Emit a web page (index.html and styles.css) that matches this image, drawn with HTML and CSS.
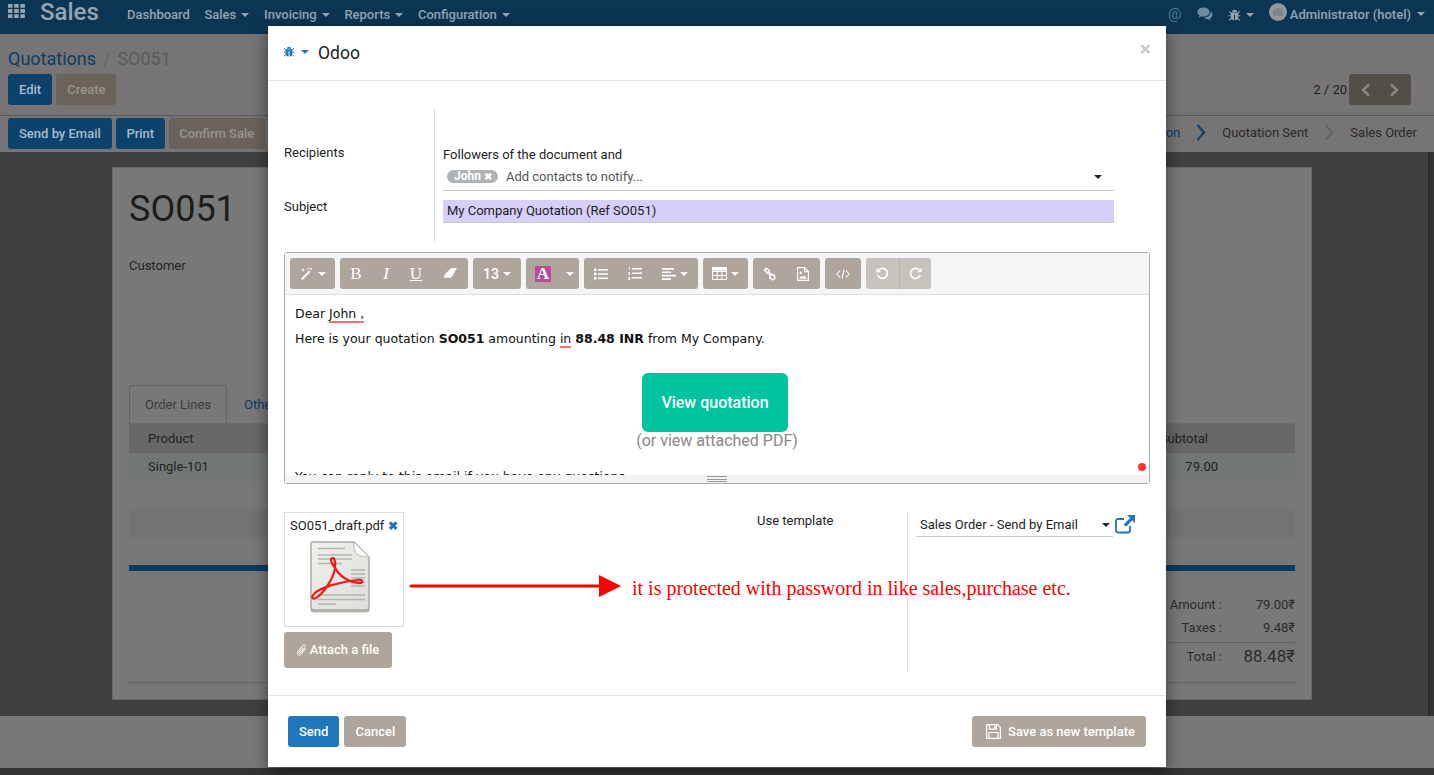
FILE: index.html
```html
<!DOCTYPE html>
<html lang="en">
<head>
    <meta charset="UTF-8">
    <title>Sales - Odoo</title>
    <link rel="stylesheet" href="styles.css">
</head>
<body>
    <svg class="sprites" width="0" height="0">
        <symbol id="bug" viewBox="0 0 16 16">
            <path fill="currentColor" d="M5 4.2C5.3 2.6 6.5 1.6 8 1.600s2.700 1 3 2.600zM4.300 5h7.400c.5 0 .8.300.8.800v6c0 1.600-1.500 2.700-3.900 2.800V7.500h-1.200v7.100c-2.400-.1-3.900-1.200-3.900-2.800v-6c0-.5.300-.8.800-.8z"/>
            <path fill="none" stroke="currentColor" stroke-width="1.300" d="M4 6 1.500 3.500M12 6l2.500-2.500M3.500 9H.7M12.500 9h2.800M4 12l-2.500 2.500M12 12l2.500 2.500"/>
        </symbol>
    </svg>

    <header class="navbar">
        <svg class="apps-icon" width="17" height="14" viewBox="0 0 17 14">
            <path fill="currentColor" d="M0 0h4.500v3.800H0zM6.200 0h4.500v3.800H6.200zM12.400 0h4.500v3.800h-4.500zM0 5.100h4.500v3.800H0zM6.200 5.100h4.500v3.800H6.200zM12.400 5.100h4.500v3.800h-4.500zM0 10.200h4.500V14H0zM6.200 10.200h4.500V14H6.200zM12.400 10.200h4.500V14h-4.500z"/>
        </svg>
        <span class="brand">Sales</span>
        <nav class="menu">
            <span>Dashboard</span>
            <span>Sales <i class="caret"></i></span>
            <span>Invoicing <i class="caret"></i></span>
            <span>Reports <i class="caret"></i></span>
            <span>Configuration <i class="caret"></i></span>
        </nav>
        <div class="systray">
            <span class="at">@</span>
            <svg width="16" height="14" viewBox="0 0 16 14">
                <path fill="currentColor" d="M6.500.5C3 .5.500 2.500.500 5c0 1.400.8 2.600 2 3.400L1.700 10.800 4.500 9.300c.6.200 1.300.2 2 .2 3.500 0 6-2 6-4.500s-2.500-4.500-6-4.500z"/>
                <path fill="currentColor" d="M13.500 4.200c.1.300.1.500.1.800 0 3-3 5.500-6.800 5.600 1 1 2.500 1.500 4.200 1.500l2.700 1.400-.6-2.200c1.200-.7 2.400-1.800 2.400-3.300 0-1.600-.8-3-2-3.800z"/>
            </svg>
            <span class="systray-bug"><svg width="13" height="14"><use href="#bug"/></svg> <i class="caret"></i></span>
            <span class="user">
                <span class="avatar">
                    <svg width="10" height="8" viewBox="0 0 10 8"><path fill="#7d8487" d="M3 0h4l1 1.500h2V8H0V1.500h2z"/></svg>
                </span>
                <span>Administrator (hotel)</span>
                <i class="caret"></i>
            </span>
        </div>
    </header>

    <section class="control-panel">
        <div class="breadcrumb"><span class="crumb-link">Quotations</span> <span class="crumb-sep">/</span> <span>SO051</span></div>
        <div class="cp-buttons">
            <div class="cp-left">
                <span class="btn btn-dim-primary">Edit</span>
                <span class="btn btn-dim">Create</span>
            </div>
            <div class="pager">
                <span>2 / 20</span>
                <span class="pager-btns">
                    <svg width="12" height="14" viewBox="0 0 12 14"><path fill="none" stroke="currentColor" stroke-width="2.400" d="M9 1.500 3 7l6 5.500"/></svg>
                    <svg width="12" height="14" viewBox="0 0 12 14"><path fill="none" stroke="currentColor" stroke-width="2.400" d="M3 1.500 9 7l-6 5.500"/></svg>
                </span>
            </div>
        </div>
    </section>

    <section class="statusbar">
        <div class="cp-left">
            <span class="btn btn-dim-primary">Send by Email</span>
            <span class="btn btn-dim-primary btn-print">Print</span>
            <span class="btn btn-dim btn-confirm">Confirm Sale</span>
        </div>
        <div class="stages">
            <span class="stage-link">on</span>
            <svg width="10" height="17" viewBox="0 0 10 17"><path fill="none" stroke="#0c426c" stroke-width="2.200" d="M1.500 1 8 8.500 1.500 16"/></svg>
            <span>Quotation Sent</span>
            <svg width="10" height="17" viewBox="0 0 10 17"><path fill="none" stroke="#646262" stroke-width="2.200" d="M1.500 1 8 8.500 1.500 16"/></svg>
            <span>Sales Order</span>
        </div>
    </section>

    <main class="sheet-area">
        <article class="sheet">
            <h1 class="so-name">SO051</h1>
            <div class="so-customer">Customer</div>
            <div class="tabs">
                <span class="tab-active">Order Lines</span>
                <span class="tab-link">Other Information</span>
            </div>
            <div class="line-head"><span>Product</span><span>Subtotal</span></div>
            <div class="line-row"><span>Single-101</span><span>79.00</span></div>
            <div class="line-empty"></div>
            <div class="blue-rule"></div>
            <div class="totals">
                <div class="total-row"><span>Untaxed Amount :</span><span class="total-val">79.00₹</span></div>
                <div class="total-row"><span>Taxes :</span><span class="total-val">9.48₹</span></div>
                <div class="total-row total-final"><span>Total :</span><span class="total-val">88.48₹</span></div>
            </div>
            <div class="sheet-foot"></div>
        </article>
    </main>
    <div class="bottom-band"></div>

    <div class="modal">
        <div class="modal-header">
            <svg class="modal-bug" width="12" height="13"><use href="#bug"/></svg>
            <i class="caret caret-blue"></i>
            <h4 class="modal-title">Odoo</h4>
            <span class="modal-close">×</span>
        </div>

        <div class="modal-body">
            <div class="mail-form">
                <div class="mail-labels">
                    <div class="label-recipients">Recipients</div>
                    <div class="label-subject">Subject</div>
                </div>
                <div class="mail-fields">
                    <div class="followers">Followers of the document and</div>
                    <div class="recipients-input">
                        <span class="tag">John <b>✖</b></span>
                        <span class="placeholder">Add contacts to notify...</span>
                        <i class="caret caret-dark"></i>
                    </div>
                    <div class="subject-input">My Company Quotation (Ref SO051)</div>
                </div>
            </div>

            <div class="editor">
                <div class="toolbar">
                    <div class="tool-group tg-style">
                        <span class="tool">
                            <svg width="14" height="14" viewBox="0 0 14 14"><path fill="currentColor" d="M1 11.500 9 3.500l1.500 1.500-8 8zM3 1l.6 1.400L5 3l-1.400.6L3 5l-.6-1.400L1 3l1.400-.6zM11 .5l.5 1 1 .5-1 .5-.5 1-.5-1-1-.5 1-.5zM8 .5l.4.9.9.4-.9.4-.4.9-.4-.9-.9-.4.9-.4z"/></svg>
                            <i class="caret"></i>
                        </span>
                    </div>
                    <div class="tool-group tg-font">
                        <span class="tool tool-letter"><b>B</b></span>
                        <span class="tool tool-letter"><em>I</em></span>
                        <span class="tool tool-letter"><u>U</u></span>
                        <span class="tool tool-eraser">
                            <svg width="15" height="11" viewBox="0 0 15 11"><path fill="currentColor" d="M9.500 0H15L10 8.500H1.500L0 11h0L4 5zM1.800 9.800h7.300L10 8.500H2.600z"/></svg>
                        </span>
                    </div>
                    <div class="tool-group tg-size">
                        <span class="tool tool-size">13 <i class="caret"></i></span>
                    </div>
                    <div class="tool-group tg-color">
                        <span class="tool tool-color"><span class="color-a">A</span></span>
                        <span class="tool tool-color-caret"><i class="caret"></i></span>
                    </div>
                    <div class="tool-group tg-para">
                        <span class="tool">
                            <svg width="14" height="12" viewBox="0 0 14 12"><path fill="currentColor" d="M0 .500h2.500V3H0zM0 4.800h2.500v2.500H0zM0 9h2.500v2.500H0zM4 1h10v1.500H4zM4 5.300h10v1.500H4zM4 9.500h10V11H4z"/></svg>
                        </span>
                        <span class="tool">
                            <svg width="14" height="13" viewBox="0 0 14 13"><path fill="currentColor" d="M.5 0h1.300v3H.9V1H.5zM0 5h2.200v.8H1L2.200 7.500V8H0v-.7h1.200L0 5.600zM0 10h2.200v3H0v-.7h1.300v-.4H.5v-.7h.8v-.4H0zM4 1h10v1.500H4zM4 5.500h10V7H4zM4 10h10v1.500H4z"/></svg>
                        </span>
                        <span class="tool tool-align">
                            <svg width="14" height="12" viewBox="0 0 14 12"><path fill="currentColor" d="M0 0h12v1.700H0zM0 3.400h9v1.700H0zM0 6.800h14v1.700H0zM0 10.200h9V12H0z"/></svg>
                            <i class="caret"></i>
                        </span>
                    </div>
                    <div class="tool-group tg-table">
                        <span class="tool">
                            <svg width="15" height="13" viewBox="0 0 15 13"><path fill="none" stroke="currentColor" d="M.5.500h14v12H.5zM.5 4.500h14M.5 8.500h14M5.200.5v12M9.800.5v12"/><path fill="currentColor" d="M0 0h15v3.500H0z"/></svg>
                            <i class="caret"></i>
                        </span>
                    </div>
                    <div class="tool-group tg-insert">
                        <span class="tool">
                            <svg width="13" height="14" viewBox="0 0 13 14"><path fill="none" stroke="currentColor" stroke-width="1.500" d="M1.500 3.200 3.200 1.500 6 3.200 6.200 5.800 4.500 6.400zM6.800 7.600l1.700-.6 3 1.700.2 2.500-1.800 1.700-3-1.800z"/><path stroke="currentColor" stroke-width="1.500" d="m4.500 4.500 4 4.500"/></svg>
                        </span>
                        <span class="tool">
                            <svg width="12" height="14" viewBox="0 0 12 14"><path fill="none" stroke="currentColor" stroke-width="1.200" d="M.6.600h7l3.800 3.800v9H.6zM7.500.6v4h4"/><path fill="currentColor" d="m2 11.800 2.500-3 1.500 1.500 1.300-2 2.700 3.500z"/><circle fill="currentColor" cx="3.800" cy="5.800" r="1.200"/></svg>
                        </span>
                    </div>
                    <div class="tool-group tg-code">
                        <span class="tool">
                            <svg width="14" height="10" viewBox="0 0 14 10"><path fill="none" stroke="currentColor" stroke-width="1.100" d="M4 1.500.9 5 4 8.500M10 1.500 13.100 5 10 8.500M8.200.5 5.800 9.500"/></svg>
                        </span>
                    </div>
                    <div class="tool-group tg-history">
                        <span class="tool tool-off">
                            <svg width="13" height="13" viewBox="0 0 13 13"><path fill="none" stroke="currentColor" stroke-width="1.700" d="M3 2.800A5 5 0 1 1 1.700 8"/><path fill="currentColor" d="M.5.800v4.500H5z"/></svg>
                        </span>
                        <span class="tool tool-off">
                            <svg width="13" height="13" viewBox="0 0 13 13"><path fill="none" stroke="currentColor" stroke-width="1.700" d="M10 2.800A5 5 0 1 0 11.300 8"/><path fill="currentColor" d="M12.500.8v4.500H8z"/></svg>
                        </span>
                    </div>
                </div>

                <div class="editor-body">
                    <p class="dear">Dear <span class="spell">John ,</span></p>
                    <p class="mail-line">Here is your quotation <b>SO051</b> amounting <span class="spell">in</span> <b>88.48 INR</b> from My Company.</p>
                    <div class="view-wrap">
                        <span class="view-btn">View quotation</span>
                        <span class="view-pdf">(or view attached PDF)</span>
                    </div>
                    <p class="mail-line mail-clipped">You can reply to this email if you have any questions.</p>
                    <span class="red-dot"></span>
                </div>
                <div class="resize-bar"><span class="grip"></span></div>
            </div>

            <div class="attach-row">
                <div class="attach-col">
                    <div class="attachment">
                        <div class="attachment-name">SO051_draft.pdf <b>✖</b></div>
                        <svg class="pdf-icon" width="62" height="72" viewBox="0 0 62 72">
                            <defs>
                                <linearGradient id="paper" x1="0" y1="0" x2="1" y2="1">
                                    <stop offset="0" stop-color="#f0f1ec"/>
                                    <stop offset="1" stop-color="#dcdeda"/>
                                </linearGradient>
                            </defs>
                            <path fill="#b5b5b0" d="M2 67h58l1 3-3 1.500H4L1 70z"/>
                            <path fill="url(#paper)" stroke="#a9aaa5" stroke-width="1.500" d="M3 1h42l15 15v50c0 2-1 3-3 3H5c-2 0-3-1-3-3V3c0-1 0-2 1-2z"/>
                            <path fill="#fafafa" stroke="#b7b8b3" d="M45 1c-1 10 2 15 15 15z"/>
                            <path fill="none" stroke="#b3b5af" stroke-width="1.300" d="M9 7.500h27M9 14h34M9 18h34M9 22.500h24M42 29h14M42 33h14M42 37h14M42 41h14M42 45h14M9 54h47M9 58.500h47M9 63h18"/>
                            <path fill="none" stroke="#f01a1a" stroke-width="2.200" d="M22 18c3-3 5 2 4 9-1 9-10 24-19 30-4 2-5-1-2-4 6-7 27-12 43-14 5-1 7 2 4 3-8 1-19-5-24-12-3-5-7-9-6-12z"/>
                        </svg>
                    </div>
                    <span class="btn btn-tan btn-attach">
                        <svg width="10" height="12" viewBox="0 0 10 12"><path fill="none" stroke="currentColor" d="M8.500 4.500 4.300 10c-1 1.300-2.500 1.300-3.300.6S0 8.600 1 7.400L5.500 1.700c.7-.9 1.700-1 2.300-.5.7.5.7 1.500 0 2.400L3.500 9c-.4.5-.9.600-1.200.3-.3-.2-.3-.7.100-1.200L6 3.500"/></svg>
                        Attach a file
                    </span>
                </div>
                <div class="template-label">Use template</div>
                <div class="template-col">
                    <div class="template-select">
                        <span>Sales Order - Send by Email</span>
                        <i class="caret caret-dark"></i>
                    </div>
                    <svg class="external" width="20" height="19" viewBox="0 0 20 19">
                        <path fill="none" stroke="#1f76ba" stroke-width="1.800" d="M15 11v4.500c0 1.400-.8 2-2 2H3c-1.300 0-2-.7-2-2V6c0-1.300.7-2 2-2h6"/>
                        <path fill="#1f76ba" d="M12 0h8v8l-2.700-2.700-6.300 6.500-2.300-2.300 6.400-6.400z"/>
                    </svg>
                </div>
                <div class="annotation">
                    <svg width="212" height="22" viewBox="0 0 212 22"><path fill="#f00" d="M2 9.500h190v3H2a1.500 1.500 0 0 1 0-3zM190 0l22 11-22 11z"/></svg>
                    <span class="annotation-text">it is protected with password in like sales,purchase etc.</span>
                </div>
            </div>
        </div>

        <div class="modal-footer">
            <span class="btn btn-send">Send</span>
            <span class="btn btn-tan btn-cancel">Cancel</span>
            <span class="btn btn-tan btn-save">
                <svg width="15" height="15" viewBox="0 0 15 15"><path fill="none" stroke="currentColor" stroke-width="1.200" d="M.6.600h11l2.800 2.800v11H.6zM3.500.6v4.500h7V.6M3 14.400V8.500h9v5.900"/><path fill="currentColor" d="M8 1.500h1.500v2.700H8z"/></svg>
                Save as new template
            </span>
        </div>
    </div>
</body>
</html>
```

FILE: styles.css
```css
* {
    box-sizing: border-box;
}
html, body {
    height: 100%;
}
body {
    margin: 0;
    height: 775px;
    overflow: hidden;
    position: relative;
    font-family: Roboto, "Liberation Sans", sans-serif;
    font-size: 13px;
    color: #1d1d1d;
    background-color: #333;
}
.sprites {
    position: absolute;
}
.caret {
    display: inline-block;
    width: 0;
    height: 0;
    border-left: 4px solid transparent;
    border-right: 4px solid transparent;
    border-top: 4px solid currentColor;
    vertical-align: middle;
    margin-left: 2px;
}
.caret-blue {
    color: #1f76ba;
}
.caret-dark {
    color: #222;
}

/* backdrop page */
.navbar {
    height: 34px;
    background-color: #0c3554;
    color: #93a5b3;
    display: flex;
    align-items: center;
    padding: 0 9px 0 8px;
}
.apps-icon {
    margin-right: 15px;
    margin-top: -12px;
}
.brand {
    font-size: 24px;
    font-weight: 500;
    width: 87px;
    margin-top: -11px;
}
.menu {
    display: flex;
    gap: 14.500px;
    font-weight: 500;
    margin-top: -6px;
}
.systray {
    margin-left: auto;
    display: flex;
    align-items: center;
    gap: 15px;
    margin-top: -6px;
}
.at {
    font-size: 15px;
    color: #4d7594;
}
.systray svg {
    color: #6f8ba1;
}
.systray-bug svg {
    vertical-align: middle;
    color: #93a5b3;
}
.user {
    display: flex;
    align-items: center;
    gap: 3px;
    font-weight: 500;
}
.user .caret {
    margin-left: 3px;
}
.avatar {
    width: 18px;
    height: 18px;
    border-radius: 50%;
    background-color: #93999b;
    margin-top: -4px;
    display: flex;
    align-items: center;
    justify-content: center;
}
.control-panel {
    height: 82px;
    background-color: #767474;
    border-bottom: 1px solid #595858;
    padding: 14px 23px 0 8px;
}
.breadcrumb {
    font-size: 18px;
    height: 26px;
    color: #5b5a59;
}
.crumb-link {
    color: #0c3b66;
}
.crumb-sep {
    color: #666464;
    margin: 0 2.500px;
}
.cp-buttons {
    display: flex;
    justify-content: space-between;
}
.cp-left {
    display: flex;
    gap: 4px;
}
.btn {
    display: inline-flex;
    align-items: center;
    justify-content: center;
    height: 31px;
    border-radius: 3px;
    font-weight: 500;
    white-space: nowrap;
}
.btn-dim-primary {
    background-color: #0c426c;
    color: #a7bccd;
    padding: 0 11px;
}
.btn-dim {
    background-color: #69635c;
    color: #98948e;
    padding: 0 11px;
}
.btn-print {
    width: 49px;
    padding: 0;
}
.btn-confirm {
    width: 96px;
    padding: 0;
}
.pager {
    display: flex;
    align-items: center;
    gap: 2px;
    color: #1e1e1e;
}
.pager-btns {
    width: 62px;
    height: 31px;
    border-radius: 3px;
    background-color: #524e48;
    color: #8b8782;
    display: flex;
    align-items: center;
    justify-content: space-around;
    padding: 0 3px;
}
.statusbar {
    height: 36px;
    background-color: #767474;
    padding: 2px 17px 0 8px;
    display: flex;
    justify-content: space-between;
}
.stages {
    display: flex;
    align-items: center;
    gap: 16px;
    color: #2a2a2a;
    height: 28px;
}
.stage-link {
    color: #0c3b66;
}
.sheet-area {
    height: 564px;
    background-color: #404040;
    padding: 15px 116px 0 112px;
    border-right: 2px solid #2b2b2b;
    margin-right: 4px;
}
.sheet {
    height: 533px;
    background-color: #787878;
    border: 1px solid #686868;
    padding: 21px 16px 0;
    color: #222;
    display: flow-root;
}
.so-name {
    margin: 0;
    font-size: 36px;
    font-weight: 400;
    line-height: 40px;
    color: #1c1c1c;
}
.so-customer {
    margin-top: 29px;
    color: #222;
}
.tabs {
    display: flex;
    align-items: center;
    height: 39px;
    margin-top: 112px;
    border-bottom: 1px solid #6e6e6e;
}
.tab-active {
    width: 98px;
    height: 39px;
    border: 1px solid #666;
    border-bottom: 0;
    border-radius: 3px 3px 0 0;
    line-height: 38px;
    text-align: center;
    color: #3c3c3c;
}
.tab-link {
    margin-left: 17px;
    color: #0c3b66;
}
.line-head,
.line-row {
    display: flex;
    justify-content: space-between;
    align-items: center;
    height: 28px;
    padding: 0 77px 1px 19px;
}
.line-head {
    background-color: #686867;
    height: 29px;
    padding: 0 87px 0 19px;
    color: #222;
}
.line-row {
    background-color: #727776;
}
.line-empty {
    height: 28px;
    margin-top: 28px;
    background-color: #707372;
}
.blue-rule {
    height: 6px;
    margin-top: 28px;
    background-color: #0c3a5f;
}
.totals {
    margin: 22px 0 0 auto;
    width: 290px;
}
.total-row {
    display: flex;
    justify-content: flex-end;
    align-items: center;
    height: 23px;
    color: #2b2b2b;
}
.total-val {
    width: 73px;
    text-align: right;
}
.total-final {
    height: 27px;
    margin-top: 3px;
    border-top: 1px solid #606060;
}
.total-final .total-val {
    font-size: 17px;
}
.sheet-foot {
    margin-top: 13px;
    border-top: 1px solid #646464;
}
.bottom-band {
    height: 52px;
    background-color: #787878;
}

/* dialog */
.modal {
    position: absolute;
    left: 268px;
    top: 26px;
    width: 898px;
    height: 741px;
    background-color: #fff;
    box-shadow: 0 5px 15px rgba(0, 0, 0, 0.5);
    display: flex;
    flex-direction: column;
}
.modal-header {
    height: 55px;
    border-bottom: 1px solid #e5e5e5;
    display: flex;
    align-items: center;
    padding: 0 15px;
    flex: none;
}
.modal-bug {
    color: #1f76ba;
    margin-top: -4px;
}
.caret-blue {
    margin-left: 6px;
    margin-top: -2px;
}
.modal-title {
    margin: 0 0 0 9px;
    font-size: 17.500px;
    font-weight: 400;
}
.modal-close {
    margin-left: auto;
    font-size: 21px;
    font-weight: 700;
    color: #c9c9c9;
    margin-top: -8px;
}
.modal-body {
    flex: 1;
    padding: 27px 16px 0;
}
.mail-form {
    display: flex;
    height: 134px;
}
.mail-labels {
    width: 151px;
    border-right: 1px solid #ddd;
    padding-top: 37px;
    flex: none;
}
.label-subject {
    margin-top: 39px;
}
.mail-fields {
    padding: 39px 0 0 8px;
    width: 679px;
}
.recipients-input {
    display: flex;
    align-items: center;
    height: 26px;
    margin-top: 3px;
    border-bottom: 1px solid #c9c9c9;
    padding: 0 12px 2px 4px;
}
.tag {
    background-color: #b0b3b5;
    color: #fff;
    border-radius: 7px;
    font-size: 12px;
    font-weight: 700;
    height: 13px;
    line-height: 13px;
    padding: 0 6px 0 7px;
    margin-right: 8px;
}
.tag b {
    font-size: 10px;
}
.placeholder {
    color: #555;
}
.recipients-input .caret {
    margin-left: auto;
}
.subject-input {
    margin-top: 9px;
    height: 23px;
    line-height: 22px;
    padding-left: 4px;
    background-color: #d7cffa;
    border-bottom: 1px solid #c9c9c9;
}
.editor {
    margin-top: 10px;
    height: 232px;
    border: 1px solid #aaa;
    border-radius: 3px;
    display: flex;
    flex-direction: column;
    position: relative;
}
.toolbar {
    height: 42px;
    flex: none;
    background-color: #f5f5f5;
    border-bottom: 1px solid #ddd;
    display: flex;
    gap: 5px;
    padding: 5px 0 0 5px;
}
.tool-group {
    height: 31px;
    display: flex;
    align-items: center;
    border-radius: 3px;
    background-color: #aea59c;
    color: #fff;
}
.tool {
    display: inline-flex;
    align-items: center;
    justify-content: center;
    gap: 2px;
    height: 31px;
    flex: none;
}
.tg-style { width: 45px; }
.tg-style .tool { width: 45px; }
.tg-font { width: 128px; padding-left: 1px; }
.tg-font .tool { width: 30px; }
.tg-font .tool-eraser { width: 37px; }
.tg-size { width: 48px; }
.tg-size .tool { width: 48px; }
.tg-color { width: 53px; }
.tg-color .tool-color { width: 34px; }
.tg-color .tool-color-caret { width: 17px; }
.tg-para { width: 114px; }
.tg-para .tool { width: 34px; }
.tg-para .tool-align { width: 46px; }
.tg-table { width: 45px; }
.tg-table .tool { width: 45px; }
.tg-insert { width: 67px; }
.tg-insert .tool { width: 33.500px; }
.tg-code { width: 36px; }
.tg-code .tool { width: 36px; }
.tg-history { width: 65px; background-color: #c8c2bc; }
.tg-history .tool { width: 32.500px; }
.tool-letter {
    font-family: "Liberation Serif", serif;
    font-size: 17px;
}
.tool-letter b {
    font-weight: 400;
}
.tool-size {
    font-size: 14px;
    font-weight: 500;
}
.color-a {
    font-family: "Liberation Serif", serif;
    font-weight: 700;
    font-size: 17px;
    line-height: 16px;
    padding: 0 2px;
    background-color: #bb4a9d;
}
.tool-off + .tool-off {
    border-left: 1px solid #b8b1aa;
}
.editor-body {
    flex: 1;
    overflow: hidden;
    padding: 10px 10px 0;
    font-family: "DejaVu Sans", "Open Sans", sans-serif;
    font-size: 12.500px;
    color: #111;
    position: relative;
}
.editor-body p {
    margin: 0;
    line-height: 18px;
}
.mail-line {
    margin-top: 7px !important;
}
.spell {
    border-bottom: 2px solid #ff6b78;
}
.view-wrap {
    margin-top: 25px;
    display: flex;
    flex-direction: column;
    align-items: center;
    font-family: Roboto, sans-serif;
}
.view-btn {
    width: 146px;
    height: 59px;
    margin-right: 4px;
    background-color: #00c4a0;
    color: #fff;
    border-radius: 6px;
    font-size: 16px;
    font-weight: 500;
    line-height: 59px;
    text-align: center;
}
.view-pdf {
    font-size: 16px;
    color: #888;
    line-height: 18px;
}
.mail-clipped {
    margin-top: 18px !important;
}
.red-dot {
    position: absolute;
    right: 3px;
    bottom: 4px;
    width: 8px;
    height: 8px;
    border-radius: 50%;
    background-color: #f33;
}
.resize-bar {
    height: 8px;
    flex: none;
    background-color: #f3f3f3;
    display: flex;
    align-items: center;
    justify-content: center;
}
.grip {
    width: 20px;
    height: 6px;
    border-top: 1px solid #999;
    border-bottom: 1px solid #999;
    background: linear-gradient(#999, #999) center / 100% 1px no-repeat;
}
.attach-row {
    margin-top: 28px;
    height: 160px;
    display: flex;
    position: relative;
}
.attach-col {
    width: 473px;
    flex: none;
}
.attachment {
    width: 120px;
    height: 115px;
    border: 1px solid #ddd;
    padding: 5px 5px 0;
    display: flex;
    flex-direction: column;
    align-items: center;
}
.attachment-name {
    white-space: nowrap;
    align-self: flex-start;
    line-height: 16px;
}
.attachment-name b {
    color: #1f76ba;
    font-size: 12px;
}
.pdf-icon {
    margin-top: 7px;
    margin-left: -8px;
    filter: blur(0.5px);
}
.btn-tan {
    background-color: #aea59c;
    color: #fff;
    padding: 0 12px;
}
.btn-attach {
    margin-top: 5px;
    width: 108px;
    height: 36px;
    gap: 3px;
    padding: 0 0 1px;
}
.btn-cancel {
    width: 62px;
    padding: 0;
}
.template-label {
    width: 150px;
    flex: none;
    padding-top: 1px;
}
.template-col {
    border-left: 1px solid #ddd;
    padding: 4px 0 0 8px;
    display: flex;
    align-items: flex-start;
    gap: 2px;
    flex: 1;
}
.template-select {
    width: 197px;
    height: 21px;
    border-bottom: 1px solid #c9c9c9;
    display: flex;
    align-items: center;
    justify-content: space-between;
    padding: 0 3px 3px 4px;
}
.external {
    margin-top: -1px;
}
.annotation {
    position: absolute;
    left: 125px;
    top: 60px;
    display: flex;
    align-items: center;
    gap: 11px;
}
.annotation-text {
    font-family: "Liberation Serif", serif;
    font-size: 20px;
    color: #f00;
    white-space: nowrap;
    margin-top: 5px;
}
.modal-footer {
    height: 72px;
    flex: none;
    border-top: 1px solid #e5e5e5;
    display: flex;
    gap: 5px;
    padding: 20px 20px 0;
}
.btn-send {
    background-color: #1f76ba;
    color: #fff;
    padding: 0 11px;
}
.btn-save {
    margin-left: auto;
    width: 174px;
    gap: 7px;
    padding: 0 0 0 3px;
}
```
